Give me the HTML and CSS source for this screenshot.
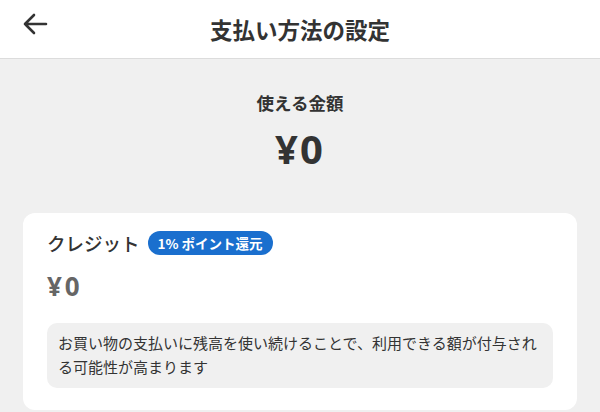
FILE: index.html
```html
<!DOCTYPE html>
<html lang="ja">
<head>
<meta charset="utf-8">
<link rel="stylesheet" href="styles.css">
</head>
<body>
<header class="topbar">
  <button class="back" aria-label="戻る">
    <svg width="26" height="24" viewBox="0 0 26 24"><path d="M24 12H3M12 3L3 12l9 9" fill="none" stroke="#333" stroke-width="2.6" stroke-linecap="round" stroke-linejoin="round"/></svg>
  </button>
  <h1 class="title">支払い方法の設定</h1>
</header>
<main class="content">
  <section class="summary">
    <div class="summary-label">使える金額</div>
    <div class="summary-amount">¥0</div>
  </section>
  <section class="card">
    <div class="card-head">
      <span class="card-title">クレジット</span>
      <span class="badge">1% ポイント還元</span>
    </div>
    <div class="card-amount">¥0</div>
    <p class="note">お買い物の支払いに残高を使い続けることで、利用できる額が付与される可能性が高まります</p>
  </section>
</main>
</body>
</html>
```
FILE: styles.css
```css
* { box-sizing: border-box; }
html, body { margin: 0; padding: 0; }
body {
  width: 600px;
  height: 412px;
  overflow: hidden;
  background: #f0f0f0;
  font-family: "Noto Sans CJK JP", "Noto Sans", sans-serif;
  color: #333;
}
.topbar {
  height: 59px;
  background: #fff;
  border-bottom: 1px solid #dcdcdc;
  display: flex;
  align-items: center;
  justify-content: center;
  position: relative;
}
.back {
  position: absolute;
  left: 22px;
  top: 12px;
  padding: 0;
  border: 0;
  background: none;
  display: flex;
}
.title {
  margin: 0;
  font-size: 22.5px;
  font-weight: 700;
  color: #333;
  line-height: 1;
}
.content {
  padding: 0 23px;
}
.summary {
  display: flex;
  flex-direction: column;
  align-items: center;
  padding-top: 31px;
}
.summary-label {
  font-size: 17.5px;
  font-weight: 700;
  line-height: 26px;
  color: #333;
}
.summary-amount {
  font-family: "Noto Sans", "Noto Sans CJK JP", sans-serif;
  font-size: 40px;
  font-weight: 700;
  line-height: 48px;
  margin-top: 9px;
  letter-spacing: 2px;
  color: #333;
}
.card {
  margin-top: 40px;
  background: #fff;
  border-radius: 12px;
  padding: 17px 24px 22px;
}
.card-head {
  display: flex;
  align-items: center;
  gap: 8px;
}
.card-title {
  font-size: 18.5px;
  font-weight: 500;
  line-height: 26px;
  color: #333;
}
.badge {
  background: #1a6fce;
  color: #fff;
  font-size: 13.5px;
  font-weight: 700;
  line-height: 24px;
  height: 24px;
  padding: 0 10px;
  border-radius: 12px;
}
.card-amount {
  font-family: "Noto Sans", "Noto Sans CJK JP", sans-serif;
  font-size: 26px;
  font-weight: 700;
  color: #666;
  line-height: 34px;
  margin-top: 13px;
  letter-spacing: 3px;
}
.note {
  margin: 20px 0 0;
  background: #f0f0f0;
  border-radius: 10px;
  padding: 8px 11px 9px 11px;
  font-size: 15px;
  line-height: 24px;
  color: #333;
}
```
